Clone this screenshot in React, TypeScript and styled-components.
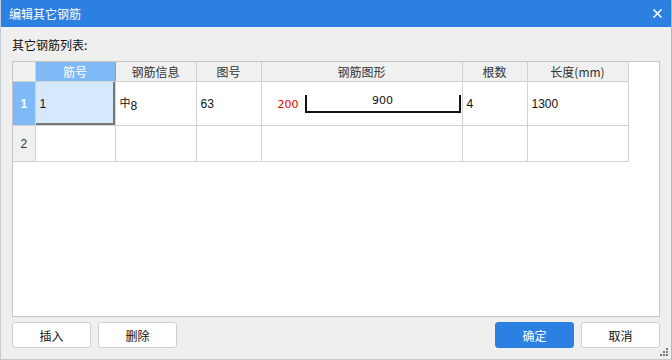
import styled, { createGlobalStyle } from 'styled-components';

type Row = {
  no: string;
  info: string;
  fig: string;
  shape: boolean;
  count: string;
  length: string;
};

const rows: Row[] = [
  { no: '1', info: '8', fig: '63', shape: true, count: '4', length: '1300' },
  { no: '', info: '', fig: '', shape: false, count: '', length: '' },
];

const columns = [
  { title: '筋号', width: 80 },
  { title: '钢筋信息', width: 81 },
  { title: '图号', width: 65 },
  { title: '钢筋图形', width: 201 },
  { title: '根数', width: 65 },
  { title: '长度(mm)', width: 101 },
];

const GlobalStyle = createGlobalStyle`
  html, body {
    margin: 0;
    padding: 0;
    background: #efefef;
  }
  body {
    font-family: "Microsoft YaHei", "Noto Sans CJK SC", "Noto Sans", sans-serif;
    font-size: 12px;
    color: #1a1a1a;
  }
`;

const ShapeCell = () => (
  <ShapeWrap>
    <SideLen>200</SideLen>
    <ShapeBox>
      <svg width="156" height="20" viewBox="0 0 156 20">
        <polyline
          points="1,1 1,18 155,18 155,1"
          fill="none"
          stroke="#111"
          strokeWidth="2"
        />
      </svg>
      <MainLen>900</MainLen>
    </ShapeBox>
  </ShapeWrap>
);

const App = () => {
  return (
    <Dialog>
      <GlobalStyle />
      <TitleBar>
        <Title>编辑其它钢筋</Title>
        <Close>
          <svg width="11" height="11" viewBox="0 0 11 11">
            <path d="M1.5 1.5 L9.5 9.5 M9.5 1.5 L1.5 9.5" stroke="#fff" strokeWidth="1.6" />
          </svg>
        </Close>
      </TitleBar>
      <Body>
        <ListLabel>其它钢筋列表:</ListLabel>
        <TableBox>
          <Grid>
            <colgroup>
              <col style={{ width: 22 }} />
              {columns.map((c) => (
                <col key={c.title} style={{ width: c.width }} />
              ))}
            </colgroup>
            <thead>
              <tr>
                <Corner />
                {columns.map((c, i) => (
                  <HeadCell key={c.title} $active={i === 0}>
                    {c.title}
                  </HeadCell>
                ))}
              </tr>
            </thead>
            <tbody>
              {rows.map((r, i) => (
                <BodyRow key={i} $tall={i === 0}>
                  <RowHead $active={i === 0}>{i + 1}</RowHead>
                  <Cell $selected={i === 0}>{r.no}</Cell>
                  <Cell>
                    {r.info && (
                      <>
                        <Phi>中</Phi>
                        {r.info}
                      </>
                    )}
                  </Cell>
                  <Cell>{r.fig}</Cell>
                  <Cell>{r.shape && <ShapeCell />}</Cell>
                  <Cell>{r.count}</Cell>
                  <Cell>{r.length}</Cell>
                </BodyRow>
              ))}
            </tbody>
          </Grid>
        </TableBox>
        <Footer>
          <Button>插入</Button>
          <Button>删除</Button>
          <Spacer />
          <Button $primary>确定</Button>
          <Button>取消</Button>
        </Footer>
      </Body>
      <Grip>
        <svg width="8" height="8" viewBox="0 0 8 8">
          <rect x="6" y="0" width="2" height="2" fill="#777" />
          <rect x="3" y="3" width="2" height="2" fill="#777" />
          <rect x="6" y="3" width="2" height="2" fill="#777" />
          <rect x="0" y="6" width="2" height="2" fill="#777" />
          <rect x="3" y="6" width="2" height="2" fill="#777" />
          <rect x="6" y="6" width="2" height="2" fill="#777" />
        </svg>
      </Grip>
    </Dialog>
  );
};

const Dialog = styled.div`
  position: relative;
  display: flex;
  flex-direction: column;
  width: 672px;
  height: 360px;
  box-sizing: border-box;
  border-left: 1px solid #c4ccd8;
  border-right: 1px solid #b8b8b8;
  border-bottom: 1px solid #c8c8c8;
  background: #efefef;
  overflow: hidden;
`;

const TitleBar = styled.div`
  display: flex;
  align-items: center;
  justify-content: space-between;
  height: 27px;
  margin: 0 -1px;
  padding: 0 9px 0 9px;
  background: #2c80e1;
  color: #fff;
`;

const Title = styled.span`
  font-size: 12px;
`;

const Close = styled.span`
  display: flex;
  align-items: center;
  width: 11px;
  height: 11px;
`;

const Body = styled.div`
  flex: 1;
  display: flex;
  flex-direction: column;
  padding: 0 11px 11px 11px;
`;

const ListLabel = styled.div`
  height: 34px;
  line-height: 36px;
  font-size: 12px;
  color: #111;
`;

const TableBox = styled.div`
  flex: 1;
  background: #fff;
  border: 1px solid #c6c6c6;
`;

const Grid = styled.table`
  border-collapse: collapse;
  table-layout: fixed;
  width: 615px;
`;

const Corner = styled.th`
  height: 19px;
  background: #f0f0f0;
  border-right: 1px solid #d2d2d2;
  border-bottom: 1px solid #d2d2d2;
  padding: 0;
`;

const HeadCell = styled.th<{ $active?: boolean }>`
  height: 19px;
  padding: 0;
  font-weight: normal;
  font-size: 12px;
  text-align: center;
  color: ${(p) => (p.$active ? '#fff' : '#333')};
  background: ${(p) => (p.$active ? '#80baf6' : '#f0f0f0')};
  border-right: 1px solid ${(p) => (p.$active ? '#6aa8ea' : '#d2d2d2')};
  border-bottom: 1px solid #d2d2d2;
`;

const BodyRow = styled.tr<{ $tall?: boolean }>`
  height: ${(p) => (p.$tall ? 44 : 36)}px;
`;

const RowHead = styled.td<{ $active?: boolean }>`
  padding: 0;
  text-align: center;
  font-size: 12px;
  font-family: "Liberation Sans", "Noto Sans", sans-serif;
  font-weight: ${(p) => (p.$active ? 'bold' : 'normal')};
  color: ${(p) => (p.$active ? '#fff' : '#333')};
  background: ${(p) => (p.$active ? '#80baf6' : '#f0f0f0')};
  border-right: 1px solid #d2d2d2;
  border-bottom: 1px solid #d2d2d2;
`;

const Cell = styled.td<{ $selected?: boolean }>`
  padding: 0 4px;
  font-size: 12px;
  font-family: "Liberation Sans", "Noto Sans CJK SC", sans-serif;
  color: #111;
  background: ${(p) => (p.$selected ? '#d5e8fc' : '#fff')};
  border-right: 1px solid #d2d2d2;
  border-bottom: 1px solid #d2d2d2;
  box-shadow: ${(p) => (p.$selected ? 'inset -2px -2px 0 #777' : 'none')};
`;

const Phi = styled.span`
  font-family: "Noto Sans CJK SC", sans-serif;
  font-size: 11px;
  vertical-align: 3px;
`;

const ShapeWrap = styled.div`
  display: flex;
  align-items: flex-end;
  gap: 6px;
  padding-left: 12px;
`;

const SideLen = styled.span`
  color: #e00000;
  font-family: "DejaVu Sans", sans-serif;
  font-size: 11px;
  margin-bottom: 3px;
`;

const ShapeBox = styled.div`
  position: relative;
  width: 156px;
  height: 20px;
  svg {
    display: block;
  }
`;

const MainLen = styled.span`
  position: absolute;
  left: 0;
  right: 0;
  top: 0;
  text-align: center;
  font-family: "DejaVu Sans", sans-serif;
  font-size: 11px;
  color: #111;
`;

const Footer = styled.div`
  display: flex;
  gap: 7px;
  margin-top: 5px;
`;

const Spacer = styled.div`
  flex: 1;
`;

const Button = styled.button<{ $primary?: boolean }>`
  width: 79px;
  height: 26px;
  padding: 0;
  border-radius: 3px;
  font-family: "Noto Sans CJK SC", sans-serif;
  font-size: 12px;
  color: ${(p) => (p.$primary ? '#fff' : '#111')};
  background: ${(p) => (p.$primary ? '#2c80e1' : '#fff')};
  border: 1px solid ${(p) => (p.$primary ? '#2c80e1' : '#cfcfcf')};
`;

const Grip = styled.div`
  position: absolute;
  right: 3px;
  bottom: 3px;
  line-height: 0;
`;

export default App;
